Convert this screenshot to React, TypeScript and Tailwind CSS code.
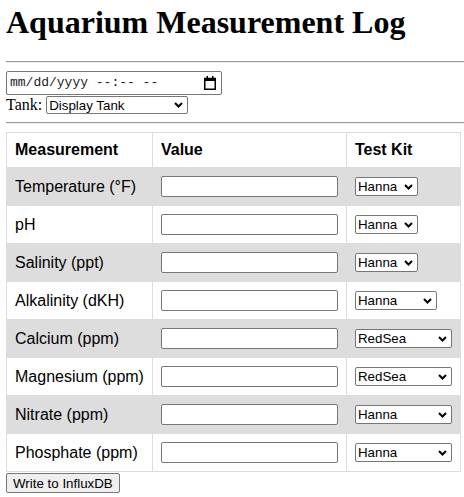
import { useState } from 'react';

type Row = {
  name: string;
  kit: string;
  options: string[];
  selectWidth: string;
};

const rows: Row[] = [
  { name: 'Temperature (°F)', kit: 'Hanna', options: ['Hanna'], selectWidth: 'w-[63px]' },
  { name: 'pH', kit: 'Hanna', options: ['Hanna'], selectWidth: 'w-[63px]' },
  { name: 'Salinity (ppt)', kit: 'Hanna', options: ['Hanna'], selectWidth: 'w-[63px]' },
  { name: 'Alkalinity (dKH)', kit: 'Hanna', options: ['Hanna', 'Salifert'], selectWidth: 'w-[82px]' },
  { name: 'Calcium (ppm)', kit: 'RedSea', options: ['RedSea', 'Hanna', 'Salifert'], selectWidth: 'w-[97px]' },
  { name: 'Magnesium (ppm)', kit: 'RedSea', options: ['RedSea', 'Hanna', 'Salifert'], selectWidth: 'w-[97px]' },
  { name: 'Nitrate (ppm)', kit: 'Hanna', options: ['Hanna', 'RedSea', 'Salifert'], selectWidth: 'w-[97px]' },
  { name: 'Phosphate (ppm)', kit: 'Hanna', options: ['Hanna', 'RedSea', 'Salifert'], selectWidth: 'w-[97px]' },
];

function Chevron() {
  return (
    <svg
      width="9"
      height="6"
      viewBox="0 0 9 6"
      className="pointer-events-none absolute right-[5px] top-1/2 -translate-y-1/2"
    >
      <path d="M1 1 L4.5 4.5 L8 1" fill="none" stroke="#000" strokeWidth="2" />
    </svg>
  );
}

function Select({ width, height, value, options }: { width: string; height: string; value: string; options: string[] }) {
  return (
    <div className={`relative ${width} ${height}`}>
      <select
        defaultValue={value}
        className="block w-full h-full appearance-none bg-white border border-[#767676] rounded-[2px] pl-[2px] pr-[16px] text-[13.33px] leading-[15px] font-['Liberation_Sans',Arial,sans-serif]"
      >
        {options.map((o) => (
          <option key={o}>{o}</option>
        ))}
      </select>
      <Chevron />
    </div>
  );
}

export default function App() {
  const [values, setValues] = useState<Record<string, string>>({});

  return (
    <div className="pl-[6px] text-black font-['Liberation_Serif',serif] text-[16px] leading-normal">
      <h1 className="pt-[4px] mb-[20px] text-[32px] leading-[37px] font-bold">Aquarium Measurement Log</h1>
      <hr className="h-0 border-t border-b border-t-[#9a9a9a] border-b-[#eeeeee] mb-[8px]" />

      {/* datetime field */}
      <div className="flex items-center w-[216px] h-[24px] border border-[#767676] rounded-[2px] pl-[3px] pr-[5px] font-['Liberation_Mono',monospace] text-[13px] text-[#222]">
        <span className="flex-1 whitespace-pre">mm/dd/yyyy --:-- --</span>
        <svg width="12" height="14" viewBox="0 0 12 14">
          <rect x="0.75" y="2.5" width="10.5" height="10.75" fill="none" stroke="#000" strokeWidth="1.5" />
          <rect x="0" y="2" width="12" height="3" fill="#000" />
          <rect x="2.5" y="0" width="1.5" height="3" fill="#000" />
          <rect x="8" y="0" width="1.5" height="3" fill="#000" />
        </svg>
      </div>
      <div className="flex items-center gap-[4px] h-[20px]">
        <span>Tank:</span>
        <Select width="w-[142px]" height="h-[18px]" value="Display Tank" options={['Display Tank', 'Frag Tank', 'Quarantine Tank']} />
      </div>
      <hr className="h-0 mt-[7px] border-t border-b border-t-[#9a9a9a] border-b-[#eeeeee] mb-[8px]" />

      <table className="border-collapse font-['Liberation_Sans',Arial,sans-serif] text-[16px] leading-[18px]">
        <thead>
          <tr>
            <th className="border border-[#dddddd] p-[8px] text-left font-bold">Measurement</th>
            <th className="border border-[#dddddd] p-[8px] text-left font-bold">Value</th>
            <th className="border border-[#dddddd] p-[8px] text-left font-bold">Test Kit</th>
          </tr>
        </thead>
        <tbody>
          {rows.map((row, i) => (
            <tr key={row.name} className={i % 2 === 0 ? 'bg-[#dddddd]' : 'bg-white'}>
              <td className="border border-[#dddddd] p-[8px] align-middle whitespace-nowrap">{row.name}</td>
              <td className="border border-[#dddddd] p-[8px] align-middle">
                <input
                  type="text"
                  value={values[row.name] || ''}
                  onChange={(e) => setValues({ ...values, [row.name]: e.target.value })}
                  className="block w-[177px] h-[21px] bg-white border border-[#767676] rounded-[2px] px-[2px] text-[13.33px]"
                />
              </td>
              <td className="border border-[#dddddd] p-[8px] align-middle">
                <Select width={row.selectWidth} height="h-[19px]" value={row.kit} options={row.options} />
              </td>
            </tr>
          ))}
        </tbody>
      </table>

      <button className="block mt-[1px] h-[20px] px-[6px] bg-[#efefef] border border-[#767676] rounded-[2px] text-[13.33px] leading-[15px] font-['Liberation_Sans',Arial,sans-serif]">
        Write to InfluxDB
      </button>
    </div>
  );
}
